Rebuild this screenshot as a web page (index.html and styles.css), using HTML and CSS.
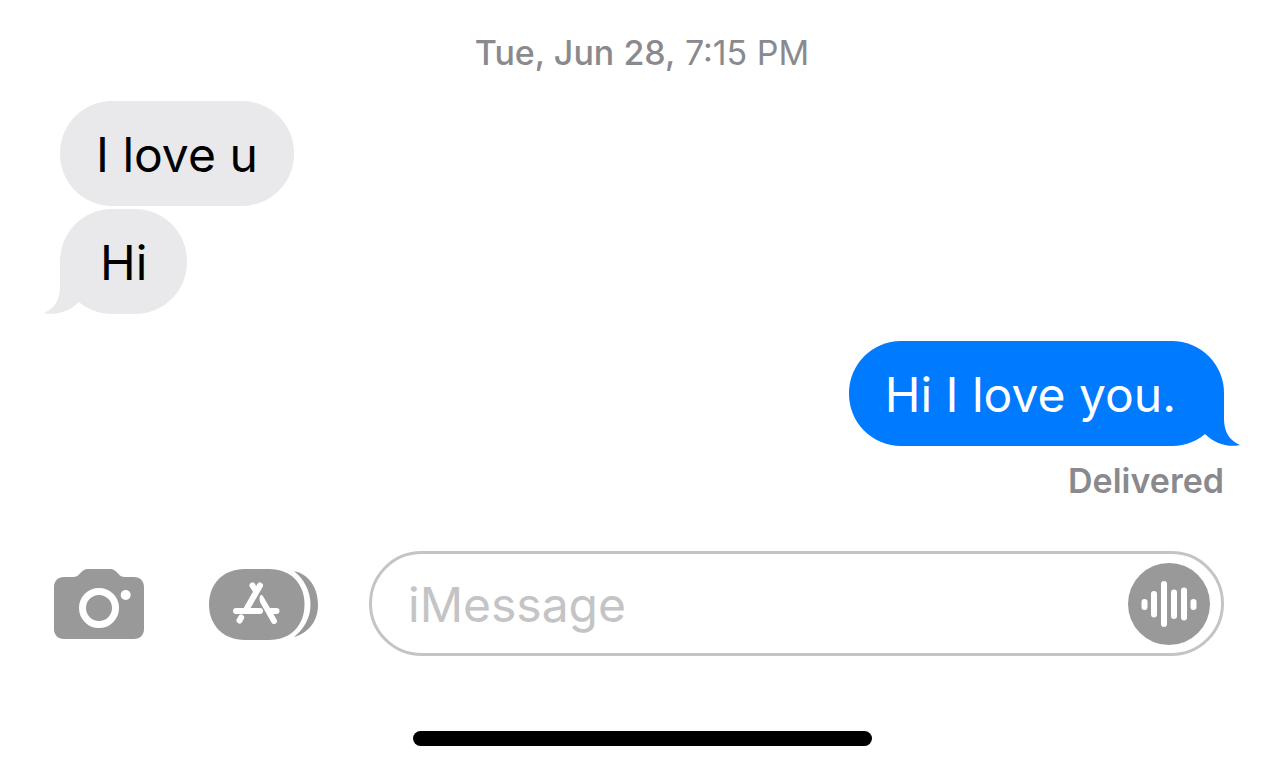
FILE: index.html
```
<!DOCTYPE html>
<html lang="en">
<head>
    <meta charset="UTF-8">
    <meta name="viewport" content="width=device-width, initial-scale=1.0">
    <title>Messages</title>
    <link rel="stylesheet" href="styles.css">
</head>
<body>
    <main class="thread">
        <time class="timestamp" datetime="06-28T19:15"><strong>Tue, Jun 28,</strong> 7:15 PM</time>

        <div class="bubble received">I love u</div>
        <div class="bubble received last">
            Hi
            <svg class="tail" viewBox="0 0 40 52" aria-hidden="true">
                <path d="M16 0V25C16 38 10 47 0 51C12 54 26 49 35 40L40 0Z"/>
            </svg>
        </div>

        <div class="bubble sent last">
            Hi I love you.
            <svg class="tail" viewBox="0 0 40 52" aria-hidden="true">
                <path d="M24 0V25C24 38 30 47 40 51C28 54 14 49 5 40L0 0Z"/>
            </svg>
        </div>
        <p class="status">Delivered</p>
    </main>

    <form class="composer">
        <button type="button" class="icon-button" aria-label="Camera">
            <svg width="90" height="70" viewBox="0 0 90 70">
                <path fill="#999" d="M10 8H19C24 8 25 5 28 2.500C30 .6 32 0 35 0H55C58 0 60 .6 62 2.500C65 5 66 8 71 8H80C86 8 90 12 90 18V60C90 66 86 70 80 70H10C4 70 0 66 0 60V18C0 12 4 8 10 8Z"/>
                <circle cx="45" cy="39" r="16.500" fill="none" stroke="#fff" stroke-width="7"/>
                <circle cx="71.700" cy="26" r="5" fill="#fff"/>
            </svg>
        </button>
        <button type="button" class="icon-button" aria-label="Apps">
            <svg width="109" height="73" viewBox="0 -2 109 73">
                <path fill="#999" d="M36 0H60C82 0 95.500 15 95.500 35.500S82 71 60 71H36C14 71 0 56 0 35.500S14 0 36 0Z"/>
                <path fill="#999" d="M85 2C99 5 109 18 109 35.500S99 64 85 68C95 60 101.500 49 101.500 35.500S95 10 85 2Z"/>
                <g fill="none" stroke="#fff" stroke-width="6" stroke-linecap="round">
                    <path d="M51 16.500L37.500 40M43.500 16.500L47 22M27 42H51M62 42H67.500M32.200 48.500L30.500 51.500"/>
                </g>
                <path fill="#fff" d="M51 27C52 25 53.500 26 54.500 28L67.600 50.500C69.500 54 64.500 57 62.500 53.500L51.500 34C50 31 50.500 28.500 51 27Z"/>
            </svg>
        </button>
        <div class="field">
            <input type="text" placeholder="iMessage" aria-label="iMessage">
            <button type="button" class="icon-button" aria-label="Record audio">
                <svg width="82" height="82" viewBox="0 0 82 82">
                    <circle cx="41" cy="41" r="41" fill="#999"/>
                    <path fill="none" stroke="#fff" stroke-width="6" stroke-linecap="round" d="M16.500 39V44M26 31V51.500M36 21V61M46 29.500V53M56 27.500V54.500M65.500 39V44"/>
                </svg>
            </button>
        </div>
    </form>

    <div class="home-indicator"></div>
</body>
</html>
```
FILE: styles.css
```
* {
    box-sizing: border-box;
}
body {
    font-family: Inter, "Liberation Sans", sans-serif;
    background-color: #fff;
    color: #000;
    margin: 0;
    padding: 33px 0 24px;
}
.thread {
    display: flex;
    flex-direction: column;
    padding: 0 60px;
}
.timestamp {
    margin-bottom: 28px;
    font-size: 34px;
    line-height: 40px;
    text-align: center;
    color: #8a8a8e;
}
.timestamp strong {
    font-weight: 500;
}
.bubble {
    position: relative;
    padding: 23px 36px 21px;
    border-radius: 52px;
    font-size: 48px;
    line-height: 61px;
}
.received {
    align-self: flex-start;
    background-color: #e9e9eb;
    margin-bottom: 3px;
}
.received.last {
    padding-left: 40px;
    padding-right: 40px;
    margin-bottom: 27px;
}
.sent {
    align-self: flex-end;
    padding-right: 48px;
    background-color: #007aff;
    color: #fff;
}
/* tail hangs off the bottom corner of the last bubble in a group */
.tail {
    position: absolute;
    bottom: 0;
    width: 40px;
    height: 52px;
}
.received .tail {
    left: -16px;
    fill: #e9e9eb;
}
.sent .tail {
    right: -16px;
    fill: #007aff;
}
.status {
    margin: 15px 0 0;
    font-size: 34px;
    font-weight: 600;
    line-height: 40px;
    text-align: right;
    color: #8a8a8e;
}
.composer {
    display: flex;
    align-items: center;
    margin-top: 50px;
    padding: 0 60px 0 54px;
    gap: 65px;
}
.icon-button {
    flex: none;
    padding: 0;
    border: none;
    background: none;
    cursor: pointer;
}
.icon-button svg {
    display: block;
}
.field {
    flex: 1;
    display: flex;
    align-items: center;
    min-width: 0;
    margin-left: -14px;
    padding: 8px 11px 8px 36px;
    border: 3px solid #c4c4c6;
    border-radius: 53px;
}
.field input {
    flex: 1;
    min-width: 0;
    padding: 12px 0 10px;
    border: none;
    outline: none;
    background: none;
    font: inherit;
    font-size: 48px;
    line-height: 61px;
}
.field input::placeholder {
    color: #c4c4c6;
    opacity: 1;
}
.home-indicator {
    width: 36%;
    max-width: 459px;
    height: 15px;
    margin: 75px auto 0;
    border-radius: 8px;
    background-color: #000;
}
```
